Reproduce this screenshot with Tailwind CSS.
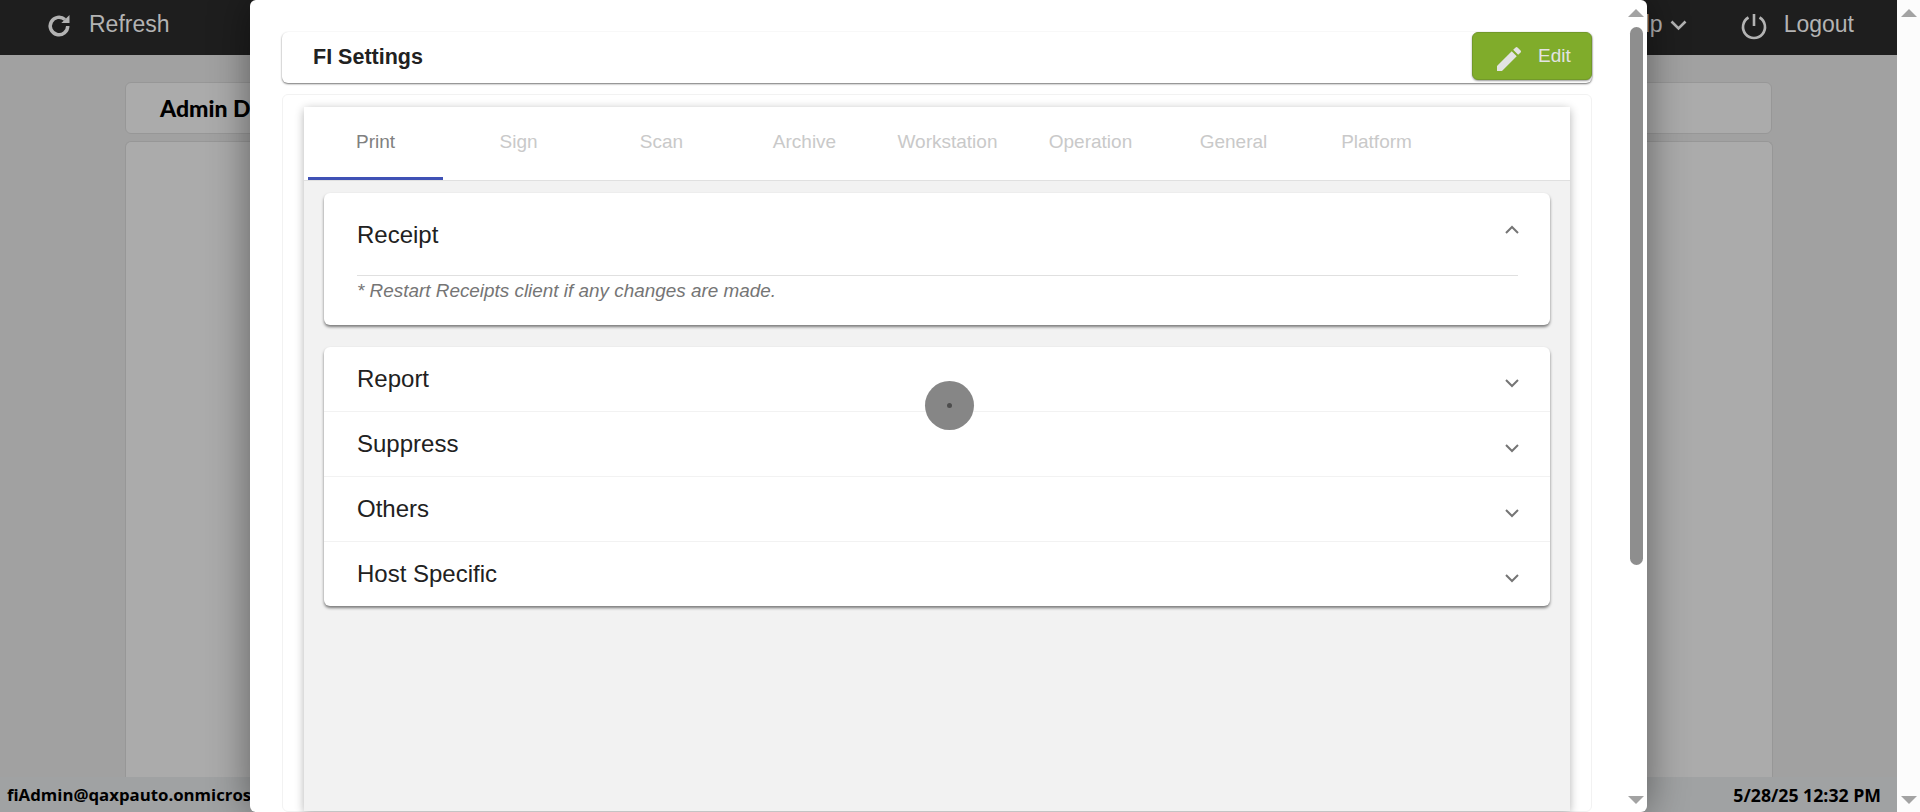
<!DOCTYPE html>
<html lang="en">
<head>
    <meta charset="UTF-8">
    <title>FI Settings</title>
    <script src="https://cdn.jsdelivr.net/npm/@tailwindcss/browser@4"></script>
</head>
<body class="bg-[#fcfcfc] font-['Liberation_Sans',sans-serif] overflow-hidden">
<div class="relative flex w-[1920px] h-[812px] overflow-hidden">
    <!-- dimmed app behind the dialog -->
    <div class="w-[1897px] h-full flex flex-col bg-[#a1a1a1]">
        <header class="h-[55px] bg-[#1e1e1e] flex items-center text-[#b3b3b3] text-[23px]">
            <svg class="ml-[45px] mb-[4px] w-[28px] h-[28px]" viewBox="0 0 24 24" fill="none" stroke="#b3b3b3" stroke-width="3"><path d="M19.5 12a7.5 7.5 0 1 1-2.4-5.5"/><path d="M21 2.5v7h-7z" fill="#b3b3b3" stroke="none"/></svg>
            <span class="ml-[16px] pb-[6px]">Refresh</span>
            <div class="ml-auto flex items-center">
                <span class="pb-[6px]">Help</span>
                <svg class="ml-[7px] mb-[5px] w-[17px] h-[12px]" viewBox="0 0 17 12" fill="none" stroke="#b3b3b3" stroke-width="2.6"><path d="M1.5 2.5l7 7 7-7"/></svg>
                <svg class="ml-[53px] mb-[3px] w-[28px] h-[28px]" viewBox="0 0 28 28" fill="none" stroke="#b3b3b3" stroke-width="2.6"><path d="M14 2v12"/><path d="M8.5 5.5a11 11 0 1 0 11 0"/></svg>
                <span class="ml-[16px] mr-[43px] pb-[6px]">Logout</span>
            </div>
        </header>
        <main class="flex-1 flex flex-col px-[125px] pt-[27px] pb-0 min-h-0 w-[1897px]">
            <div class="w-[1647px] h-[52px] shrink-0 rounded-md border border-[#979797] bg-[#ababab] flex items-center pl-[34px]">
                <span class="font-['Lato',sans-serif] font-black text-[23px] text-black">Admin Dashboard</span>
            </div>
            <div class="w-[1648px] flex-1 mt-[7px] rounded-t-md border border-b-0 border-[#979797] bg-[#ababab]"></div>
        </main>
        <footer class="h-[35px] flex items-center justify-between pl-[7px] pr-[16px] pt-[1px] bg-[#a0a2a3] font-bold font-['Open_Sans',sans-serif] text-black">
            <span class="text-[16.8px]">fiAdmin@qaxpauto.onmicrosoft.com</span>
            <span class="text-[17.7px]">5/28/25 12:32 PM</span>
        </footer>
    </div>
    <!-- outer page scrollbar -->
    <div class="w-[23px] h-full flex flex-col items-center justify-between pt-[9px] pb-[8px]">
        <div class="w-0 h-0 border-x-[8px] border-x-transparent border-b-[8px] border-b-[#a3a3a3]"></div>
        <div class="w-0 h-0 border-x-[8px] border-x-transparent border-t-[8px] border-t-[#a3a3a3]"></div>
    </div>

    <!-- dialog -->
    <div class="absolute left-[250px] top-0 w-[1397px] h-[812px] bg-white rounded-md shadow-[0_0_40px_rgba(0,0,0,0.45)] flex overflow-hidden">
        <div class="w-[1375px] shrink-0 pl-[32px] pr-[33px] pt-[32px] flex flex-col">
            <div class="relative h-[51px] shrink-0 bg-white rounded-md shadow-[0_1px_2px_rgba(0,0,0,0.55)] flex items-center justify-between pl-[31px]">
                <span class="text-[21.5px] font-bold text-[#212121]">FI Settings</span>
                <button class="w-[120px] h-[48px] self-start rounded-md border border-[#72992a] bg-[#80ac2b] flex items-center pl-[20px] shadow-[0_1px_2px_rgba(0,0,0,0.4)]">
                    <svg class="mt-[6px] w-[32px] h-[32px]" viewBox="0 0 24 24" fill="#e3e3e3"><path d="M3 17.25V21h3.75L17.81 9.94l-3.75-3.75L3 17.25zM20.71 7.04a1 1 0 0 0 0-1.41l-2.34-2.34a1 1 0 0 0-1.41 0l-1.83 1.83 3.75 3.75 1.83-1.83z"/></svg>
                    <span class="ml-[13px] text-[19px] text-[#e3e3e3]">Edit</span>
                </button>
            </div>
            <div class="mt-[11px] flex-1 min-h-0 rounded-md border border-[#f2f2f2] pl-[21px] pr-[21px] pt-[12px]">
                <div class="h-full bg-[#f2f2f2] shadow-[0_2px_10px_rgba(0,0,0,0.3)] rounded-t-sm">
                    <nav class="h-[74px] bg-white border-b border-[#e0e0e0] flex text-[19px] text-[#c9c9c9]">
                        <div class="w-[143px] h-full flex items-center justify-center pb-[2px] text-[#808080] relative">Print<div class="absolute left-[4px] right-[4px] bottom-0 h-[3px] bg-[#3f51b5]"></div></div>
                        <div class="w-[143px] h-full flex items-center justify-center pb-[2px]">Sign</div>
                        <div class="w-[143px] h-full flex items-center justify-center pb-[2px]">Scan</div>
                        <div class="w-[143px] h-full flex items-center justify-center pb-[2px]">Archive</div>
                        <div class="w-[143px] h-full flex items-center justify-center pb-[2px]">Workstation</div>
                        <div class="w-[143px] h-full flex items-center justify-center pb-[2px]">Operation</div>
                        <div class="w-[143px] h-full flex items-center justify-center pb-[2px]">General</div>
                        <div class="w-[143px] h-full flex items-center justify-center pb-[2px]">Platform</div>
                    </nav>
                    <div class="px-[20px] pt-[12px]">
                        <section class="h-[132px] bg-white rounded-md shadow-[0_2px_3px_rgba(0,0,0,0.5)] pl-[33px] pr-[32px] relative">
                            <div class="h-[83px] flex items-center justify-between border-b border-[#e0e0e0] text-[24px] text-[#212121]">
                                <span class="pt-[2px]">Receipt</span>
                                <svg class="w-[16px] h-[10px] mr-[-2px] mb-[9px]" viewBox="0 0 16 10" fill="none" stroke="#757575" stroke-width="2"><path d="M2 8l6-6 6 6"/></svg>
                            </div>
                            <p class="pt-[3px] text-[18.9px] leading-6 italic text-[#757575]">* Restart Receipts client if any changes are made.</p>
                        </section>
                        <section class="mt-[22px] bg-white rounded-md shadow-[0_2px_3px_rgba(0,0,0,0.5)] text-[24px] text-[#212121]">
                            <div class="h-[64px] pl-[33px] pr-[32px] flex items-center justify-between">
                                <span>Report</span>
                                <svg class="w-[16px] h-[10px] mr-[-2px] mt-[8px]" viewBox="0 0 16 10" fill="none" stroke="#757575" stroke-width="2"><path d="M2 2l6 6 6-6"/></svg>
                            </div>
                            <div class="h-[65px] pl-[33px] pr-[32px] flex items-center justify-between border-t border-[#f2f2f2]">
                                <span>Suppress</span>
                                <svg class="w-[16px] h-[10px] mr-[-2px] mt-[8px]" viewBox="0 0 16 10" fill="none" stroke="#757575" stroke-width="2"><path d="M2 2l6 6 6-6"/></svg>
                            </div>
                            <div class="h-[65px] pl-[33px] pr-[32px] flex items-center justify-between border-t border-[#f2f2f2]">
                                <span>Others</span>
                                <svg class="w-[16px] h-[10px] mr-[-2px] mt-[8px]" viewBox="0 0 16 10" fill="none" stroke="#757575" stroke-width="2"><path d="M2 2l6 6 6-6"/></svg>
                            </div>
                            <div class="h-[65px] pl-[33px] pr-[32px] flex items-center justify-between border-t border-[#f2f2f2]">
                                <span>Host Specific</span>
                                <svg class="w-[16px] h-[10px] mr-[-2px] mt-[8px]" viewBox="0 0 16 10" fill="none" stroke="#757575" stroke-width="2"><path d="M2 2l6 6 6-6"/></svg>
                            </div>
                        </section>
                    </div>
                </div>
            </div>
        </div>
        <!-- dialog scrollbar -->
        <div class="w-[22px] h-full flex flex-col items-center pt-[9px]">
            <div class="w-0 h-0 border-x-[8px] border-x-transparent border-b-[8px] border-b-[#a3a3a3]"></div>
            <div class="mt-[10px] w-[13px] h-[538px] rounded-full bg-[#8e8e8e]"></div>
            <div class="mt-auto mb-[8px] w-0 h-0 border-x-[8px] border-x-transparent border-t-[8px] border-t-[#a3a3a3]"></div>
        </div>
    </div>

    <!-- busy spinner -->
    <div class="absolute left-[925px] top-[381px] w-[49px] h-[49px] rounded-full bg-[#868686] flex items-center justify-center">
        <div class="w-[5px] h-[5px] rounded-full bg-[#4d4d4d]"></div>
    </div>
</div>
</body>
</html>
